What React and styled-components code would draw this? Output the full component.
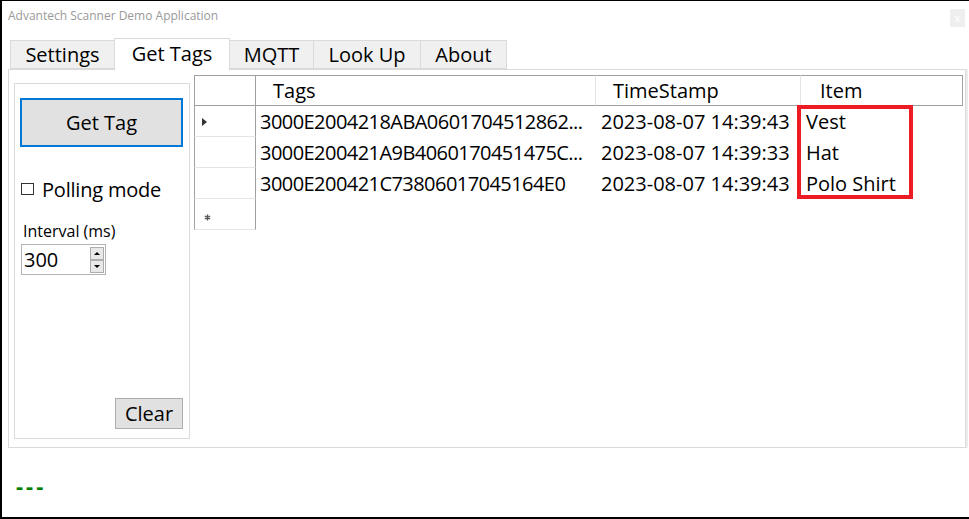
import React from 'react';
import styled, { createGlobalStyle } from 'styled-components';

const GlobalStyle = createGlobalStyle`
  html, body {
    margin: 0;
    padding: 0;
    background: #fff;
  }
  body {
    font-family: "Open Sans", "Noto Sans", sans-serif;
    color: #000;
  }
  * {
    box-sizing: border-box;
  }
`;

const StdWindow = styled.div`
  width: 969px;
  height: 519px;
  border-left: 2px solid #000;
  border-top: 1px solid #000;
  border-bottom: 2px solid #000;
  display: flex;
  flex-direction: column;
  background: #fff;
  overflow: hidden;
`;

const StdTitleBar = styled.div`
  height: 29px;
  display: flex;
  align-items: center;
  justify-content: space-between;
  padding: 0 4px 0 6px;
`;

const StdTitle = styled.span`
  font-size: 12px;
  color: #9a9a9a;
`;

const StdClose = styled.div`
  width: 15px;
  height: 18px;
  margin-top: 4px;
  background: #efefef;
  color: #fff;
  font-size: 11px;
  display: flex;
  align-items: center;
  justify-content: center;
`;

const StdTabStrip = styled.div`
  height: 39px;
  display: flex;
  align-items: flex-end;
  padding-left: 8px;
`;

const StdTab = styled.div`
  position: relative;
  z-index: ${(p) => (p.$active ? 2 : 1)};
  width: ${(p) => p.$w}px;
  height: ${(p) => (p.$active ? 32 : 29)}px;
  margin-bottom: ${(p) => (p.$active ? -1 : 0)}px;
  padding-bottom: ${(p) => (p.$active ? 3 : 0)}px;
  margin-left: -1px;
  border: 1px solid #dadada;
  border-bottom: ${(p) => (p.$active ? 'none' : '1px solid #dadada')};
  background: ${(p) => (p.$active ? '#fff' : '#f0f0f0')};
  display: flex;
  align-items: center;
  justify-content: center;
  font-size: 20px;
  &:first-child {
    margin-left: 0;
  }
`;

const StdTabPage = styled.div`
  margin-left: 6px;
  width: 958px;
  height: 379px;
  border: 1px solid #dadada;
  box-shadow: 2px 0 0 #ececec;
  display: flex;
  align-items: flex-start;
  gap: 4px;
  padding: 5px 0 0 5px;
`;

const StdSidePanel = styled.div`
  margin-top: 8px;
  width: 176px;
  height: 356px;
  border: 1px solid #dadada;
  display: flex;
  flex-direction: column;
  padding: 14px 6px 9px 5px;
`;

const StdButton = styled.button`
  width: ${(p) => p.$w}px;
  height: ${(p) => p.$h}px;
  border: ${(p) => (p.$focused ? '2px solid #0078d7' : '1px solid #adadad')};
  background: #e1e1e1;
  font-family: inherit;
  font-size: 20px;
  color: #000;
  padding: 0;
`;

const StdClearButton = styled(StdButton)`
  margin-top: auto;
  align-self: flex-end;
`;

const StdCheckRow = styled.label`
  margin-top: 28px;
  height: 28px;
  display: flex;
  align-items: center;
  gap: 8px;
  padding-left: 1px;
  font-size: 20px;
  letter-spacing: -0.2px;
`;

const StdCheckBox = styled.span`
  width: 13px;
  height: 12px;
  border: 1px solid #333;
  background: #fff;
`;

const StdFieldLabel = styled.div`
  margin-top: 17px;
  padding-left: 3px;
  font-size: 16px;
  line-height: 22px;
`;

const StdNumeric = styled.div`
  margin-top: 2px;
  margin-left: 1px;
  width: 85px;
  height: 31px;
  border: 1px solid #b4b4b4;
  display: flex;
  align-items: center;
  justify-content: space-between;
  padding: 0 1px 0 2px;
  font-size: 20px;
`;

const StdSpinner = styled.div`
  display: flex;
  flex-direction: column;
`;

const StdSpinButton = styled.div`
  width: 14px;
  height: 13px;
  border: 1px solid #adadad;
  background: #e8e8e8;
  display: flex;
  align-items: center;
  justify-content: center;
  &::after {
    content: '';
    border-left: 3px solid transparent;
    border-right: 3px solid transparent;
    ${(p) => (p.$up ? 'border-bottom: 3px solid #000;' : 'border-top: 3px solid #000;')}
  }
`;

const StdGrid = styled.div`
  position: relative;
  display: grid;
  grid-template-columns: 62px 340px 205px 162px;
  grid-auto-rows: 31px;
`;

const StdHeaderCell = styled.div`
  border-top: 1px solid #a0a0a0;
  border-bottom: 1px solid #a0a0a0;
  border-left: ${(p) => (p.$corner ? '1px solid #a0a0a0' : 'none')};
  border-right: 1px solid ${(p) => (p.$corner || p.$last ? '#a0a0a0' : '#e4e4e4')};
  padding-left: ${(p) => p.$pad || 17}px;
  font-size: 20px;
  display: flex;
  align-items: center;
`;

const StdRowHeader = styled.div`
  border-left: 1px solid #a0a0a0;
  border-right: 1px solid #a0a0a0;
  border-bottom: 1px solid #e4e4e4;
  display: flex;
  align-items: center;
  padding-left: 7px;
`;

const StdCurrentMark = styled.span`
  margin-top: 2px;
  border-top: 4px solid transparent;
  border-bottom: 4px solid transparent;
  border-left: 5px solid #333;
`;

const StdCell = styled.div`
  padding-left: ${(p) => p.$pad}px;
  font-size: 20px;
  letter-spacing: ${(p) => p.$tight || 0}px;
  white-space: nowrap;
  display: flex;
  align-items: center;
`;

const StdHighlight = styled.div`
  position: absolute;
  left: 603px;
  top: 30px;
  width: 116px;
  height: 94px;
  border: 4px solid #ed1c24;
  pointer-events: none;
`;

const StdStatus = styled.div`
  flex: 1;
  padding: 22px 0 0 14px;
`;

const StdStatusText = styled.span`
  font-size: 22px;
  font-weight: bold;
  letter-spacing: 3px;
  color: #008000;
`;

const tabs = [
  { label: 'Settings', w: 105 },
  { label: 'Get Tags', w: 116, active: true },
  { label: 'MQTT', w: 85 },
  { label: 'Look Up', w: 108 },
  { label: 'About', w: 87 },
];

const rows = [
  { tag: '3000E2004218ABA0601704512862...', time: '2023-08-07 14:39:43', item: 'Vest', current: true },
  { tag: '3000E200421A9B4060170451475C...', time: '2023-08-07 14:39:33', item: 'Hat' },
  { tag: '3000E200421C73806017045164E0', time: '2023-08-07 14:39:43', item: 'Polo Shirt' },
];

const NewRowMark = () => (
  <svg width='7' height='7' viewBox='0 0 7 7' style={{ marginTop: 6, marginLeft: 2 }}>
    <path d='M3.5 0.5v6M0.8 2l5.4 3M0.8 5l5.4-3' stroke='#555' strokeWidth='1.4' />
  </svg>
);

const App = () => {
  return (
    <>
      <GlobalStyle />
      <StdWindow>
        <StdTitleBar>
          <StdTitle>Advantech Scanner Demo Application</StdTitle>
          <StdClose>x</StdClose>
        </StdTitleBar>

        <StdTabStrip>
          {tabs.map((t) => (
            <StdTab key={t.label} $w={t.w} $active={t.active}>
              {t.label}
            </StdTab>
          ))}
        </StdTabStrip>

        <StdTabPage>
          <StdSidePanel>
            <StdButton $w={163} $h={49} $focused>
              Get Tag
            </StdButton>
            <StdCheckRow>
              <StdCheckBox />
              Polling mode
            </StdCheckRow>
            <StdFieldLabel>Interval (ms)</StdFieldLabel>
            <StdNumeric>
              300
              <StdSpinner>
                <StdSpinButton $up />
                <StdSpinButton />
              </StdSpinner>
            </StdNumeric>
            <StdClearButton $w={68} $h={31}>
              Clear
            </StdClearButton>
          </StdSidePanel>

          <StdGrid>
            <StdHeaderCell $corner />
            <StdHeaderCell>Tags</StdHeaderCell>
            <StdHeaderCell>TimeStamp</StdHeaderCell>
            <StdHeaderCell $last $pad={19}>
              Item
            </StdHeaderCell>

            {rows.map((r) => (
              <React.Fragment key={r.tag}>
                <StdRowHeader>{r.current && <StdCurrentMark />}</StdRowHeader>
                <StdCell $pad={4} $tight={-0.55}>
                  {r.tag}
                </StdCell>
                <StdCell $pad={5}>{r.time}</StdCell>
                <StdCell $pad={5}>{r.item}</StdCell>
              </React.Fragment>
            ))}

            <StdRowHeader>
              <NewRowMark />
            </StdRowHeader>

            <StdHighlight />
          </StdGrid>
        </StdTabPage>

        <StdStatus>
          <StdStatusText>---</StdStatusText>
        </StdStatus>
      </StdWindow>
    </>
  );
};

export default App;
